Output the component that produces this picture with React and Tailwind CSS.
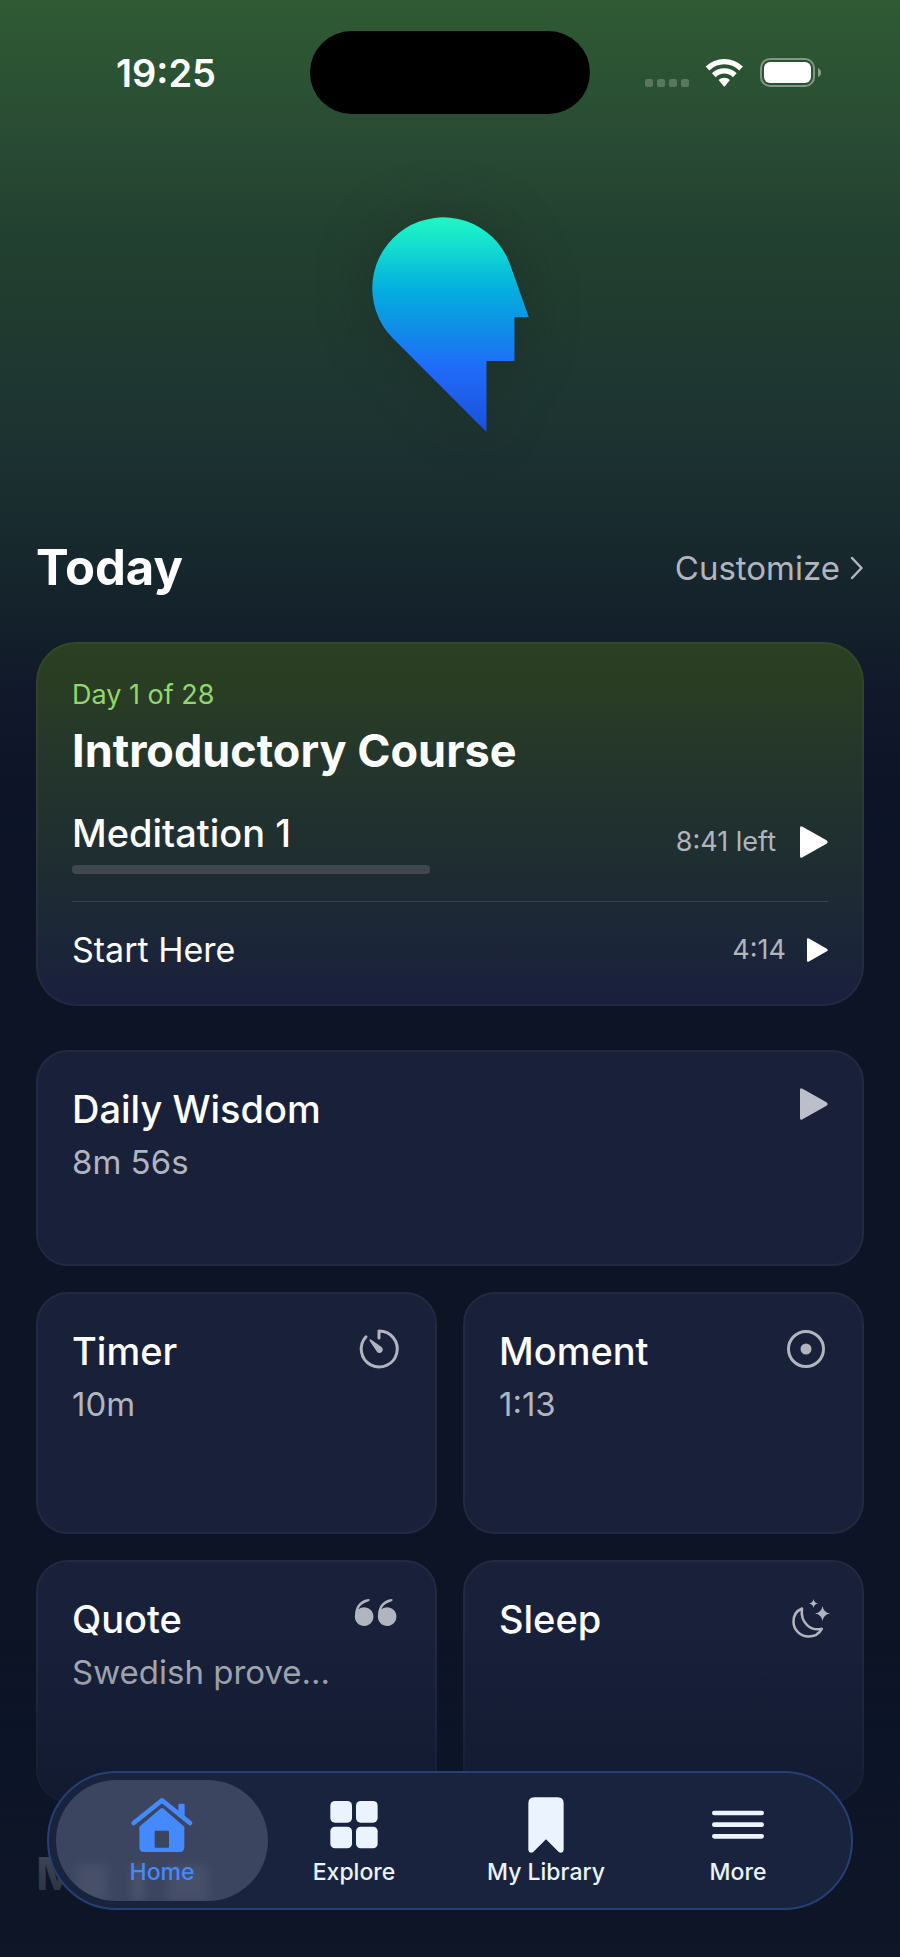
import { useState } from 'react'
import clsx from 'clsx'

function Logo() {
  return (
    <svg
      viewBox="95 80 470 645"
      className="w-[157px] h-[215px] overflow-visible drop-shadow-[0_0_28px_rgba(24,34,32,0.4)]"
      aria-hidden="true"
    >
      <defs>
        <linearGradient id="logo" x1="0" y1="80" x2="0" y2="725" gradientUnits="userSpaceOnUse">
          <stop offset="0" stopColor="#1ff7c6" />
          <stop offset="0.08" stopColor="#18eacb" />
          <stop offset="0.34" stopColor="#04ade0" />
          <stop offset="0.52" stopColor="#108de8" />
          <stop offset="0.7" stopColor="#206bfa" />
          <stop offset="1" stopColor="#1c50d8" />
        </linearGradient>
      </defs>
      <path d="M157 444A213 213 0 1 1 508 220L565 381H522V512H438V725Z" fill="url(#logo)" />
    </svg>
  )
}

function StatusIcons() {
  return (
    <svg viewBox="645 55 177 36" className="w-[177px] h-9" aria-hidden="true">
      <g fill="#fff" fillOpacity="0.22">
        <rect x="645" y="79" width="8" height="8" rx="2" />
        <rect x="657" y="79" width="8" height="8" rx="2" />
        <rect x="669" y="79" width="8" height="8" rx="2" />
        <rect x="681" y="79" width="8" height="8" rx="2" />
      </g>
      <g fill="none" stroke="#fff" strokeWidth="5.4">
        <path d="M707.5 68.5a24 24 0 0 1 33.6 0" />
        <path d="M713.8 75.2a15 15 0 0 1 21 0" />
      </g>
      <path d="M718.6 80a8.2 8.2 0 0 1 11.4 0l-5.1 6.2q-.6.6-1.2 0z" fill="#fff" />
      <rect x="761" y="59" width="53" height="27" rx="9" fill="none" stroke="#fff" strokeOpacity="0.4" strokeWidth="2" />
      <rect x="764" y="62" width="47" height="21" rx="6" fill="#fff" />
      <path d="M818 68q3 1.500 3 4.500t-3 4.500z" fill="#fff" fillOpacity="0.45" />
    </svg>
  )
}

function PlayIcon({ className }) {
  return (
    <svg viewBox="0 0 28 32" fill="currentColor" className={className} aria-hidden="true">
      <path d="M0 2Q0-.8 2.500.7L26.500 14.200Q28.800 16 26.500 17.800L2.500 31.300Q0 32.800 0 30Z" />
    </svg>
  )
}

function TimerIcon() {
  return (
    <svg viewBox="0 0 48 48" className="size-12 shrink-0" fill="none" aria-hidden="true">
      <path
        d="M26 11V4A18 18 0 1 1 13 9.800"
        stroke="currentColor"
        strokeWidth="3"
        strokeLinecap="round"
        strokeLinejoin="round"
      />
      <path d="M16.600 12.600q.6-.6 1.300 0l10.300 7.200a3.300 3.300 0 1 1-4.600 4.400l-7-10.400q-.4-.7 0-1.200z" fill="currentColor" />
    </svg>
  )
}

function MomentIcon() {
  return (
    <svg viewBox="0 0 48 48" className="size-12 shrink-0" fill="none" aria-hidden="true">
      <circle cx="26" cy="22" r="17.500" stroke="currentColor" strokeWidth="3" />
      <circle cx="26" cy="22" r="5.500" fill="currentColor" />
    </svg>
  )
}

function QuoteIcon() {
  return (
    <svg viewBox="0 0 48 48" className="size-12 shrink-0" fill="currentColor" aria-hidden="true">
      <path d="M2 20C2 11 8 4.500 15.500 4q1.500 0 1 1.500Q16.300 6 15 6.400C10 8 6.500 11 5.600 14.200A9.300 9.300 0 1 1 2 20Z" />
      <path d="M25 20C25 11 31 4.500 38.500 4q1.500 0 1 1.500Q39.300 6 38 6.400C33 8 29.500 11 28.600 14.200A9.300 9.300 0 1 1 25 20Z" />
    </svg>
  )
}

function SleepIcon() {
  return (
    <svg viewBox="0 0 48 48" className="size-12 shrink-0 overflow-visible" fill="none" aria-hidden="true">
      <path
        d="M22 13.500C16 16 13.500 21 13.500 26.500A15 15 0 0 0 28.500 41.500C34 41.500 39 39 41.800 33.800C31 36.500 20 28 22 13.500Z"
        stroke="currentColor"
        strokeWidth="2.500"
        strokeLinejoin="round"
      />
      <path d="M33.500 4q.6 3.900 4.500 4.500-3.900.6-4.500 4.500-.6-3.900-4.500-4.500 3.900-.6 4.500-4.500z" fill="currentColor" />
      <path d="M42.500 11q1 6.500 7.500 7.500-6.500 1-7.500 7.500-1-6.500-7.500-7.500 6.500-1 7.500-7.500z" fill="currentColor" />
    </svg>
  )
}

function HomeIcon() {
  return (
    <svg viewBox="389 165 198 180" className="w-[66px] h-[60px]" fill="currentColor" aria-hidden="true">
      <path d="M537 226V195q0-4 4-4h11q4 0 4 4v48z" />
      <path d="M403 249L488 181L572 249" fill="none" stroke="currentColor" strokeWidth="14" strokeLinecap="round" strokeLinejoin="round" />
      <path
        fillRule="evenodd"
        d="M420 260L483 206Q488 202 493 206L555 260V322Q555 336 541 336H434Q420 336 420 322ZM469 272q-3 0-3 3v45q0 3 3 3h37q3 0 3-3v-45q0-3-3-3z"
      />
    </svg>
  )
}

function ExploreIcon() {
  return (
    <svg viewBox="963 165 198 180" className="w-[66px] h-[60px]" fill="currentColor" aria-hidden="true">
      <rect x="991" y="183" width="65" height="65" rx="14" />
      <rect x="1068" y="183" width="65" height="65" rx="14" />
      <rect x="991" y="260" width="65" height="65" rx="14" />
      <rect x="1068" y="260" width="65" height="65" rx="14" />
    </svg>
  )
}

function LibraryIcon() {
  return (
    <svg viewBox="186 165 198 180" className="w-[66px] h-[60px]" fill="currentColor" aria-hidden="true">
      <path d="M250 172H320Q338 172 338 190V330Q336 342 324 337L285 298L246 337Q234 342 232 330V190Q232 172 250 172Z" />
    </svg>
  )
}

function MoreIcon() {
  return (
    <svg viewBox="765 165 198 180" className="w-[66px] h-[60px]" aria-hidden="true">
      <path d="M793 219H935M793 254H935M793 289H935" stroke="currentColor" strokeWidth="14" strokeLinecap="round" />
    </svg>
  )
}

const TABS = [
  { label: 'Home', Icon: HomeIcon },
  { label: 'Explore', Icon: ExploreIcon },
  { label: 'My Library', Icon: LibraryIcon },
  { label: 'More', Icon: MoreIcon },
]

function Tile({ title, subtitle, icon, className }) {
  return (
    <button
      type="button"
      className={clsx(
        'flex items-start justify-between rounded-[32px] border-2 border-[#222940] bg-[#19203a] px-[34px] py-[33px] text-left',
        className
      )}
    >
      <span className="min-w-0">
        <span className="block text-[38px] leading-[48px] font-medium text-white">{title}</span>
        {subtitle && (
          <span className="block mt-[7px] text-[33px] leading-[44px] whitespace-nowrap">{subtitle}</span>
        )}
      </span>
      {icon}
    </button>
  )
}

export default function App() {
  const [tab, setTab] = useState('Home')

  return (
    <div className="min-h-screen bg-[#0c1426] bg-[linear-gradient(180deg,#2f5a33_0px,#294b34_140px,#22402f_240px,#1d3431_420px,#182a2e_530px,#14212b_620px,#10182a_700px,#0d1428_790px,#0c1426_900px)] bg-no-repeat font-['Inter','Liberation_Sans',sans-serif] text-[#b1b5bf]">
      <header className="grid grid-cols-[1fr_280px_1fr] items-center pt-[31px]">
        <span className="pr-[94px] text-right text-[38px] leading-[48px] font-semibold text-white">19:25</span>
        <div className="h-[83px] rounded-full bg-black" />
        <div className="pl-[55px]">
          <StatusIcons />
        </div>
      </header>

      <main className="px-9 pb-12">
        <div className="flex justify-center pt-[103px]">
          <Logo />
        </div>

        <div className="mt-[106px] flex items-center justify-between">
          <h1 className="text-[49px] leading-[60px] font-bold text-white">Today</h1>
          <a href="#customize" className="flex items-center gap-[10px] text-[33px] leading-[44px]">
            Customize
            <svg viewBox="0 0 14 24" className="w-[14px] h-6" fill="none" aria-hidden="true">
              <path d="M2 2L11.500 12L2 22" stroke="currentColor" strokeWidth="2.500" strokeLinecap="round" strokeLinejoin="round" />
            </svg>
          </a>
        </div>

        <section className="mt-[44px] rounded-[40px] border-2 border-white/4 bg-[linear-gradient(180deg,#2b4021_0%,#293c25_15%,#23352c_36%,#1e2c32_65%,#1b2539_85%,#1a1f3d_100%)] bg-origin-border px-[34px] pt-[35px] pb-[32px]">
          <p className="text-[27px] leading-[32px] text-[#93d66e]">Day 1 of 28</p>
          <h2 className="mt-[12px] text-[45px] leading-[56px] font-bold text-white">Introductory Course</h2>

          <div className="mt-[30px] flex items-center justify-between">
            <div className="w-[358px]">
              <h3 className="text-[38px] leading-[48px] font-medium text-white">Meditation 1</h3>
              <div
                role="progressbar"
                aria-label="Meditation 1"
                aria-valuenow={0}
                className="mt-2 h-[9px] rounded-sm bg-[#40474f]"
              />
            </div>
            <button type="button" className="flex items-center gap-6 text-[27px] leading-[32px]">
              8:41 left
              <PlayIcon className="w-7 h-8 text-white" />
            </button>
          </div>

          <hr className="mt-[27px] border-[#3b444e]" />

          <div className="mt-[26px] flex items-center justify-between">
            <h3 className="text-[34px] leading-[44px] text-white">Start Here</h3>
            <button type="button" className="flex items-center gap-[21px] text-[27px] leading-[32px]">
              4:14
              <PlayIcon className="w-[21px] h-6 text-white" />
            </button>
          </div>
        </section>

        <div className="mt-[44px] grid grid-cols-2 gap-[26px]">
          <Tile
            title="Daily Wisdom"
            subtitle="8m 56s"
            icon={<PlayIcon className="mt-[3px] w-7 h-8 text-[#bcbecb]" />}
            className="col-span-2 h-[216px]"
          />
          <Tile title="Timer" subtitle="10m" icon={<TimerIcon />} className="h-[242px]" />
          <Tile title="Moment" subtitle="1:13" icon={<MomentIcon />} className="h-[242px]" />
          <Tile title="Quote" subtitle="Swedish prove..." icon={<QuoteIcon />} className="h-[242px]" />
          <Tile title="Sleep" icon={<SleepIcon />} className="h-[242px]" />
        </div>

        <h2 className="mt-[44px] text-[45px] leading-[56px] font-bold text-white">M</h2>
      </main>

      {/* content fades out under the tab bar */}
      <div className="pointer-events-none fixed inset-x-0 bottom-0 h-[320px] bg-[linear-gradient(180deg,rgba(12,22,42,0)_0%,rgba(13,22,42,0.35)_35%,rgba(14,22,40,0.78)_65%,rgba(14,22,40,1)_100%)]" />

      <nav className="fixed inset-x-[47px] bottom-[47px] grid grid-cols-4 rounded-full border-2 border-[#283f74] bg-[#19233e] px-[17px] py-[7px]">
        {TABS.map(({ label, Icon }) => (
          <button
            key={label}
            type="button"
            onClick={() => setTab(label)}
            aria-current={tab === label ? 'page' : undefined}
            className={clsx(
              'relative mx-[-10px] flex h-[121px] flex-col items-center overflow-hidden rounded-full pt-[15px] text-[23px] leading-[28px] font-medium',
              tab === label ? 'bg-[#3c4560] text-[#4489ff]' : 'text-[#eaf3ff]'
            )}
          >
            {/* heading behind the glass */}
            {tab === label && (
              <span className="absolute bottom-0 left-5 flex gap-6 blur-[5px]">
                <span className="h-9 w-8 bg-white/6" />
                <span className="h-9 w-3 bg-white/8" />
                <span className="h-9 w-10 bg-white/6" />
              </span>
            )}
            <Icon />
            <span className="relative mt-[3px]">{label}</span>
          </button>
        ))}
      </nav>
    </div>
  )
}
